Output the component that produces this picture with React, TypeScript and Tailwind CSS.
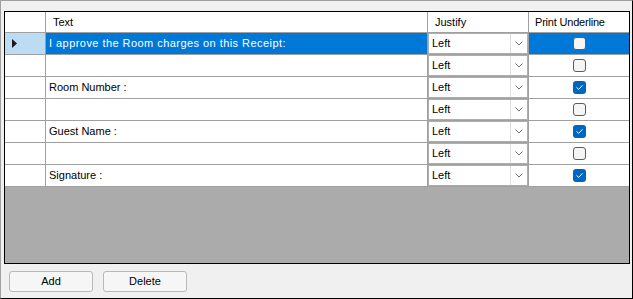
import React from 'react';

type Row = { text: string; underline: boolean };

const rows: Row[] = [
  { text: 'I approve the Room charges on this Receipt:', underline: false },
  { text: '', underline: false },
  { text: 'Room Number :', underline: true },
  { text: '', underline: false },
  { text: 'Guest Name :', underline: true },
  { text: '', underline: false },
  { text: 'Signature :', underline: true },
];

function Checkbox({ checked }: { checked: boolean }) {
  if (checked) {
    return (
      <div className="w-[13px] h-[13px] rounded-[3px] bg-[#0067c0] flex items-center justify-center">
        <svg width="9" height="9" viewBox="0 0 9 9" fill="none">
          <path d="M1.8 4.6 L3.7 6.4 L7.2 2.6" stroke="white" strokeWidth="1" strokeLinecap="round" strokeLinejoin="round" />
        </svg>
      </div>
    );
  }
  return <div className="w-[13px] h-[13px] rounded-[3px] border border-[#5c5c5c] bg-[#f5f5f5]" />;
}

function Combo() {
  return (
    <div className="h-full w-full flex border border-[#adadad] bg-white">
      <div className="flex-1 flex items-center pl-[3px] text-black">Left</div>
      <div className="w-[17px] border-l border-[#dcdcdc] flex items-center justify-center">
        <svg width="8" height="5" viewBox="0 0 8 5" fill="none">
          <path d="M0.5 0.5 L4 4 L7.5 0.5" stroke="#707070" strokeWidth="1" />
        </svg>
      </div>
    </div>
  );
}

export default function App() {
  return (
    <div
      className="w-[633px] h-[299px] bg-[#f0f0f0] border border-l-[#a0a0a0] border-t-[#a0a0a0] border-r-black border-b-black text-[11px] text-black"
      style={{ fontFamily: '"Liberation Sans", Arial, sans-serif' }}
    >
      {/* Grid */}
      <div className="ml-[3px] mt-[10px] w-[626px] h-[253px] border border-black bg-[#ababab] flex flex-col">
        {/* Header */}
        <div className="flex h-[21px] bg-white border-b border-[#a0a0a0] shrink-0">
          <div className="w-[41px] border-r border-[#a0a0a0]" />
          <div className="w-[382px] border-r border-[#a0a0a0] flex items-center pl-[7px]">Text</div>
          <div className="w-[101px] border-r border-[#a0a0a0] flex items-center pl-[7px]">Justify</div>
          <div className="w-[100px] flex items-center pl-[6px] tracking-[-0.2px]">Print Underline</div>
        </div>

        {/* Rows */}
        {rows.map((row, i) => {
          const selected = i === 0;
          return (
            <div key={i} className="flex h-[22px] border-b border-[#a0a0a0] shrink-0">
              <div
                className={`w-[41px] border-r border-[#a0a0a0] flex items-center pl-[7px] ${
                  selected ? 'bg-[#bcdcf4]' : 'bg-white'
                }`}
              >
                {selected && (
                  <svg width="5" height="9" viewBox="0 0 5 9">
                    <path d="M0 0 L5 4.5 L0 9 Z" fill="#1a1a1a" />
                  </svg>
                )}
              </div>
              <div
                className={`w-[382px] border-r border-[#a0a0a0] flex items-center pl-[3px] ${
                  selected ? 'bg-[#0078d7] text-white tracking-[0.45px]' : 'bg-white'
                }`}
              >
                {row.text}
              </div>
              <div className="w-[101px] border-r border-[#a0a0a0] bg-white">
                <Combo />
              </div>
              <div
                className={`w-[100px] flex items-center justify-center ${selected ? 'bg-[#0078d7]' : 'bg-white'}`}
              >
                <Checkbox checked={row.underline} />
              </div>
            </div>
          );
        })}
      </div>

      {/* Buttons */}
      <div className="flex gap-[10px] ml-[8px] mt-[7px]">
        <button className="w-[84px] h-[21px] rounded-[3px] border border-[#b9b9b9] bg-[#f6f6f6] text-[11px]">Add</button>
        <button className="w-[84px] h-[21px] rounded-[3px] border border-[#b9b9b9] bg-[#f6f6f6] text-[11px]">Delete</button>
      </div>
    </div>
  );
}
